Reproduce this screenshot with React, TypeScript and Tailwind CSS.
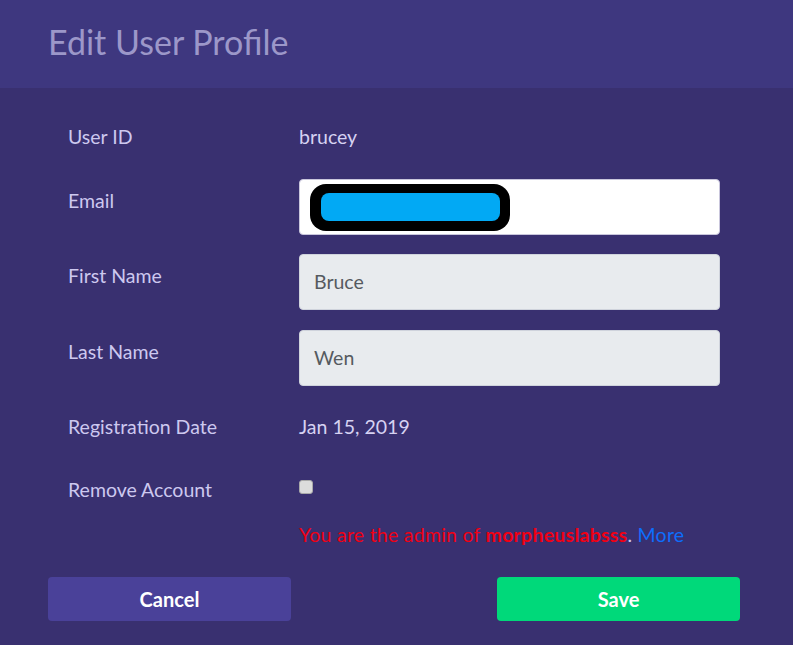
import React from "react";

const font = { fontFamily: "Lato, 'Noto Sans', sans-serif" };

function Label({ children, pad = false }: { children: React.ReactNode; pad?: boolean }) {
  return (
    <div className={`text-[19.5px] leading-[27px] text-[#cdc8ef] ${pad ? "pt-2" : ""}`}>{children}</div>
  );
}

export default function App() {
  return (
    <div className="w-[793px] h-[645px] bg-[#393070] flex flex-col" style={font}>
      {/* Header */}
      <div className="h-[88px] bg-[#3e377f] flex items-center px-[48px]">
        <h1 className="text-[34px] leading-none text-[#9c97c9] -mt-1">Edit User Profile</h1>
      </div>

      {/* Form body */}
      <div className="flex flex-col pt-[35px] pl-[68px] pr-[73px]">
        <div className="grid grid-cols-[231px_1fr]">
          <Label>User ID</Label>
          <div className="text-[19.5px] leading-[27px] text-[#d6d2f2]">brucey</div>
        </div>

        <div className="grid grid-cols-[231px_1fr] mt-[29px]">
          <Label pad>Email</Label>
          <div className="h-[56px] bg-white rounded-[4px] border border-[#c9c6dc] flex items-center pl-[10px]">
            <div className="w-[200px] h-[47px] rounded-[16px] bg-black flex items-center justify-center">
              <div className="w-[179px] h-[28px] rounded-[8px] bg-[#02a9f4]" />
            </div>
          </div>
        </div>

        <div className="grid grid-cols-[231px_1fr] mt-[19px]">
          <Label pad>First Name</Label>
          <div className="h-[56px] bg-[#e8ebee] rounded-[4px] border border-[#cfd3dc] flex items-center px-[14px] text-[19.5px] text-[#555a60]">
            Bruce
          </div>
        </div>

        <div className="grid grid-cols-[231px_1fr] mt-[20px]">
          <Label pad>Last Name</Label>
          <div className="h-[56px] bg-[#e8ebee] rounded-[4px] border border-[#cfd3dc] flex items-center px-[14px] text-[19.5px] text-[#555a60]">
            Wen
          </div>
        </div>

        <div className="grid grid-cols-[231px_1fr] mt-[27px]">
          <Label>Registration Date</Label>
          <div className="text-[19.5px] leading-[27px] text-[#d6d2f2]">Jan 15, 2019</div>
        </div>

        <div className="grid grid-cols-[231px_1fr] mt-[36px]">
          <Label>Remove Account</Label>
          <div className="pt-[4px]">
            <span className="block w-[14px] h-[14px] rounded-[3px] bg-[#dcdcdc] border border-[#a9a9a9]" />
          </div>
        </div>

        <div className="grid grid-cols-[231px_1fr] mt-[18px]">
          <div />
          <div className="text-[19.5px] leading-[27px] tracking-[0.25px] text-[#f00014] whitespace-nowrap">
            You are the admin of <span className="font-bold">morpheuslabsss</span>
            <span className="text-[#cdc8ef]">.</span> <span className="text-[#0d6efd]">More</span>
          </div>
        </div>
      </div>

      {/* Actions */}
      <div className="flex justify-between pl-[48px] pr-[53px] mt-[29px]">
        <button
          type="button"
          className="w-[243px] h-[44px] rounded-[4px] bg-[#4a4199] text-white font-bold text-[20px]"
        >
          Cancel
        </button>
        <button
          type="button"
          className="w-[243px] h-[44px] rounded-[4px] bg-[#00d97a] text-white font-bold text-[20px]"
        >
          Save
        </button>
      </div>
    </div>
  );
}
